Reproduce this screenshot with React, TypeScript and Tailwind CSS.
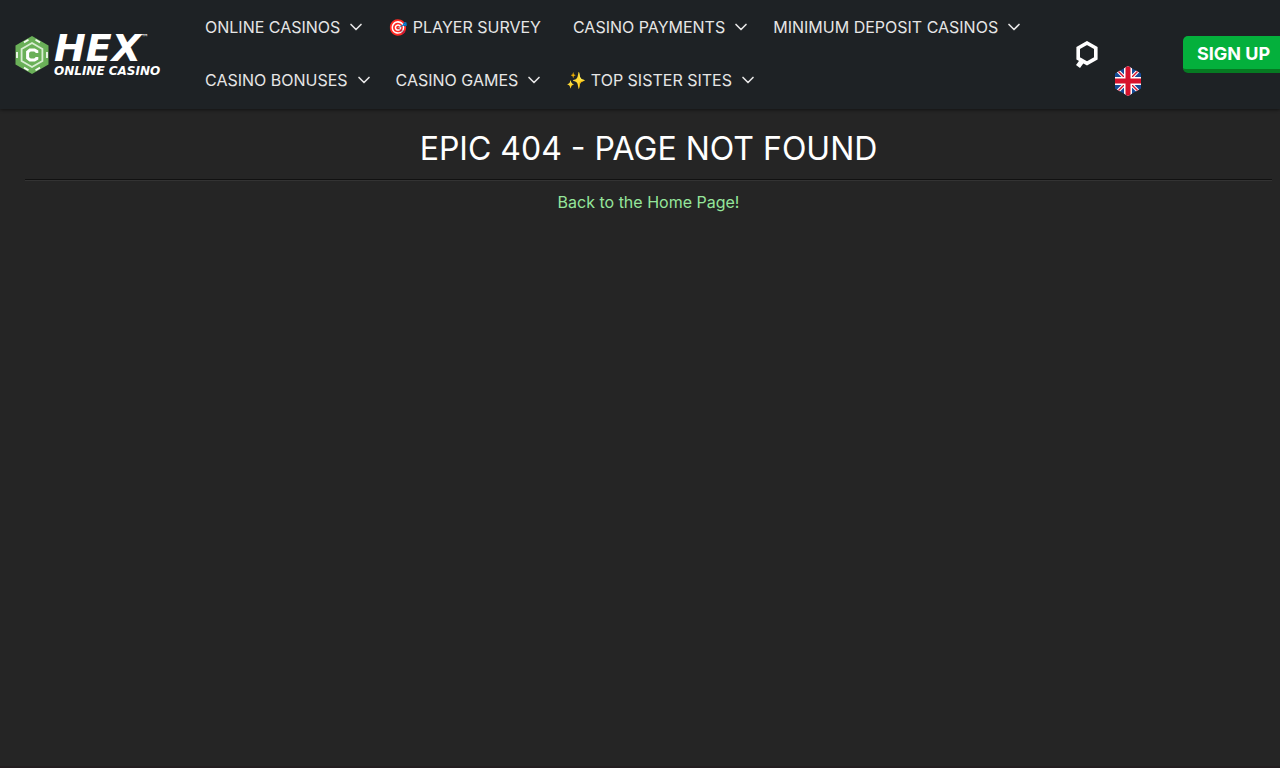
import { ChevronDown } from 'lucide-react';

interface NavItem {
  label: string;
  emoji?: string;
  hasMenu: boolean;
}

const navItems: NavItem[] = [
  { label: 'ONLINE CASINOS', hasMenu: true },
  { label: 'PLAYER SURVEY', emoji: '🎯', hasMenu: false },
  { label: 'CASINO PAYMENTS', hasMenu: true },
  { label: 'MINIMUM DEPOSIT CASINOS', hasMenu: true },
  { label: 'CASINO BONUSES', hasMenu: true },
  { label: 'CASINO GAMES', hasMenu: true },
  { label: 'TOP SISTER SITES', emoji: '✨', hasMenu: true },
];

function Logo() {
  return (
    <a href="#" aria-label="Hex Online Casino" className="flex items-center gap-1 shrink-0 w-[163px] text-white">
      <svg width="36" height="40" viewBox="0 0 36 40" className="shrink-0">
        <path d="M18 1 L34.5 10.5 V29.5 L18 39 L1.5 29.5 V10.5 Z" fill="#6ab058" />
        <path
          d="M10 7.4 L14.5 4.8 M21.5 4.8 L26 7.4 M33 17 V23 M26 32.6 L21.5 35.2 M14.5 35.2 L10 32.6 M3 23 V17"
          fill="none"
          stroke="#f4faf2"
          strokeWidth="1.8"
        />
        <path d="M18 8 L28.4 14 V26 L18 32 L7.6 26 V14 Z" fill="none" stroke="#d8edd2" strokeWidth="1.8" />
        <path
          d="M22.8 18 V16.4 L20.5 15 H16 L13.6 17 V23 L16 25 H20.5 L22.8 23.6 V22"
          fill="none"
          stroke="#ffffff"
          strokeWidth="3"
        />
      </svg>
      <span className="flex flex-col gap-1 font-['DejaVu_Sans',sans-serif] font-bold italic">
        <span className="flex items-start">
          <span className="text-[38px] leading-[28px]">HEX</span>
          <span className="text-[8px] leading-[8px] font-normal not-italic">™</span>
        </span>
        <span className="text-xs leading-[10px] whitespace-nowrap">ONLINE CASINO</span>
      </span>
    </a>
  );
}

function SearchIcon() {
  return (
    <svg width="22" height="28" viewBox="0 0 22 28" fill="none" stroke="#ffffff">
      <path d="M11 2 L19.8 7 V17.4 L11 22.4 L2.2 17.4 V7 Z" strokeWidth="3.6" />
      <path d="M6.4 19.6 L2 25.4" strokeWidth="5" />
    </svg>
  );
}

function UkFlag() {
  return (
    <svg width="26" height="30" viewBox="0 0 26 30">
      <clipPath id="flag-hex">
        <path d="M13 0 L26 7.5 V22.5 L13 30 L0 22.5 V7.5 Z" />
      </clipPath>
      <g clipPath="url(#flag-hex)">
        <rect width="26" height="30" fill="#164a96" />
        <path d="M-2 0 L28 30 M28 0 L-2 30" stroke="#ffffff" strokeWidth="3.6" />
        <path d="M-2 0 L28 30 M28 0 L-2 30" stroke="#d6122c" strokeWidth="1.3" />
        <path d="M13 0 V30 M0 15 H26" stroke="#ffffff" strokeWidth="8" />
        <path d="M13 0 V30 M0 15 H26" stroke="#d6122c" strokeWidth="5" />
      </g>
    </svg>
  );
}

function Header() {
  return (
    <header className="flex items-center bg-[#1e2225] pl-[14px] shadow-[0_1px_3px_rgba(0,0,0,0.5)]">
      <Logo />
      <nav className="flex-1 ml-7 pb-[3px]">
        <ul className="flex flex-wrap">
          {navItems.map((item) => (
            <li key={item.label} className={item.hasMenu ? 'pr-[22px]' : 'pr-8'}>
              <a href="#" className="flex items-center h-[53px] text-base text-[#e6e6e6] whitespace-nowrap">
                {item.emoji ? `${item.emoji} ${item.label}` : item.label}
                {item.hasMenu && <ChevronDown size={20} strokeWidth={2} className="ml-[6px]" />}
              </a>
            </li>
          ))}
        </ul>
      </nav>
      <div className="flex items-center shrink-0 w-[204px]">
        <button type="button" aria-label="Search">
          <SearchIcon />
        </button>
        <button type="button" aria-label="Language: English" className="ml-[17px] pt-[52px]">
          <UkFlag />
        </button>
        <a
          href="#"
          className="ml-[42px] h-[37px] px-[14px] shrink-0 rounded-[5px] bg-[#04b03c] border-b-4 border-[#067a22] text-lg leading-[35px] font-bold text-white whitespace-nowrap"
        >
          SIGN UP
        </a>
      </div>
    </header>
  );
}

export default function App() {
  return (
    <div className="flex flex-col min-h-screen overflow-x-hidden bg-[#252525] border-b-2 border-[#231e20] font-['Inter',sans-serif]">
      <Header />
      <main className="pl-[25px] pr-2 pt-5 text-center">
        <h1 className="text-[32px] leading-10 text-white">EPIC 404 - PAGE NOT FOUND</h1>
        <hr className="mt-[10px] border-t border-b border-t-[#111111] border-b-[#333333]" />
        <p className="mt-[9px] text-base">
          <a href="#" className="text-[#95e69b]">
            Back to the Home Page!
          </a>
        </p>
      </main>
    </div>
  );
}
